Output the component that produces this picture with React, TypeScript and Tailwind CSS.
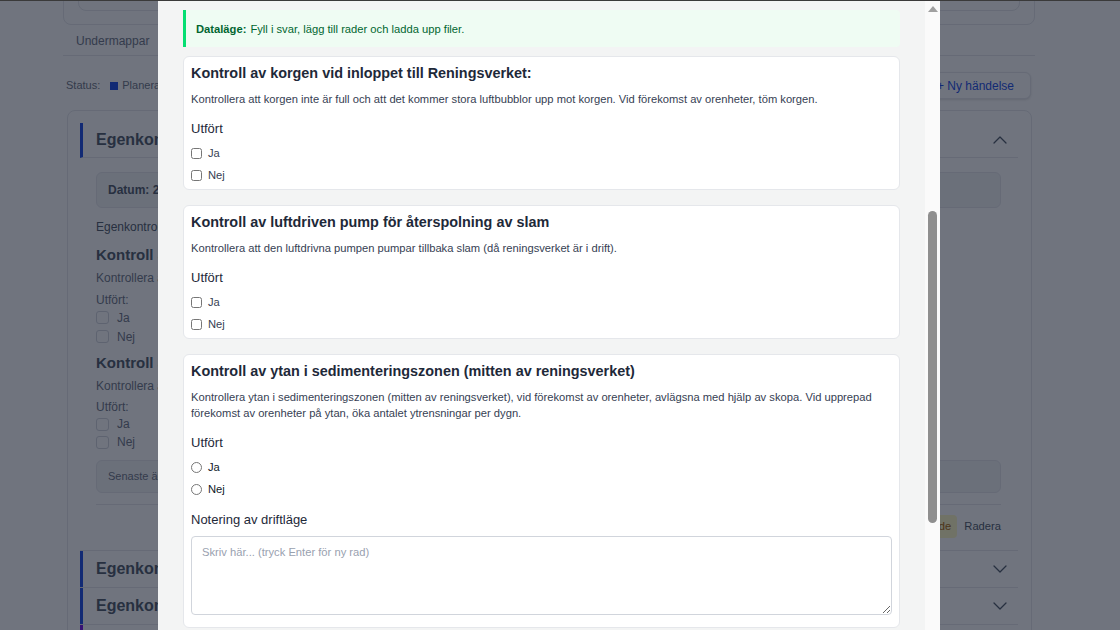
import { ChevronDown, ChevronUp } from "lucide-react";

type Question = {
  title: string;
  desc: React.ReactNode;
  kind: "checkbox" | "radio";
  note?: boolean;
};

const questions: Question[] = [
  {
    title: "Kontroll av korgen vid inloppet till Reningsverket:",
    desc: "Kontrollera att korgen inte är full och att det kommer stora luftbubblor upp mot korgen. Vid förekomst av orenheter, töm korgen.",
    kind: "checkbox",
  },
  {
    title: "Kontroll av luftdriven pump för återspolning av slam",
    desc: "Kontrollera att den luftdrivna pumpen pumpar tillbaka slam (då reningsverket är i drift).",
    kind: "checkbox",
  },
  {
    title: "Kontroll av ytan i sedimenteringszonen (mitten av reningsverket)",
    desc: (
      <>
        Kontrollera ytan i sedimenteringszonen (mitten av reningsverket), vid förekomst av orenheter, avlägsna med hjälp av skopa. Vid upprepad
        <br />
        förekomst av orenheter på ytan, öka antalet ytrensningar per dygn.
      </>
    ),
    kind: "radio",
    note: true,
  },
];

function BgCheck({ label, tight = false }: { label: string; tight?: boolean }) {
  return (
    <div className={tight ? "flex h-[18px] items-center gap-2" : "flex h-[19px] items-center gap-2"}>
      <span className="h-[13px] w-[13px] rounded-[3px] border border-gray-300 bg-white" />
      <span className="text-xs text-gray-500">{label}</span>
    </div>
  );
}

function BgRow({ title, color }: { title: string; color: string }) {
  return (
    <div className="border-b border-gray-200">
      <div className={`flex h-[36px] items-center justify-between border-l-[3px] pl-[13px] pr-[6px] ${color}`}>
        <span className="text-base font-bold text-gray-600">{title}</span>
        <ChevronDown size={24} strokeWidth={1.3} className="text-gray-600" />
      </div>
    </div>
  );
}

function BackgroundPage() {
  return (
    <div className="h-full w-[1035px] bg-white pl-[63px]">
      <div className="-mt-5 h-[45px] rounded-lg border border-gray-200 bg-white px-[14px]">
        <div className="flex h-[30px] items-end rounded-lg border border-gray-200 pb-[5px] pl-[34px]">
          <span className="text-sm font-bold text-gray-700">Skötselinstruktioner</span>
        </div>
      </div>

      <div className="flex h-[31px] items-center border-b border-gray-200 px-[13px] pt-[2px]">
        <span className="text-xs font-medium text-gray-500">Undermappar</span>
      </div>

      <div className="mt-[16px] flex h-[27px] items-center justify-between pl-[3px] pr-[4px]">
        <div className="flex items-center gap-[4px] text-[11px] text-gray-500">
          <span className="mr-[6px]">Status:</span>
          <span className="h-[8px] w-[8px] bg-blue-700" />
          <span>Planerad</span>
          <span className="ml-2 h-[8px] w-[8px] bg-yellow-400" />
          <span>Pågående</span>
        </div>
        <button className="h-[27px] rounded-md border border-gray-200 bg-white px-4 text-xs font-medium text-blue-700 shadow-sm">
          + Ny händelse
        </button>
      </div>

      <div className="ml-[4px] mr-[3px] mt-[11px] h-[600px] rounded-lg border border-gray-200 bg-white py-[12px] pl-[12px] pr-[13px]">
        <div className="border-b border-gray-200">
          <div className="flex h-[35px] items-center justify-between border-b border-l-[3px] border-b-gray-200 border-l-blue-700 pl-[13px] pr-[6px]">
            <span className="text-base font-bold text-gray-600">Egenkontroll – Minireningsverk</span>
            <ChevronUp size={24} strokeWidth={1.3} className="text-gray-600" />
          </div>
          <div className="pb-[12px] pl-[16px] pr-[17px]">
            <div className="mt-[14px] flex h-[36px] items-center rounded-md border border-gray-200 bg-gray-100 px-[11px]">
              <span className="text-xs font-bold text-gray-600">Datum: 2025-03-14</span>
            </div>
            <p className="mt-[11px] text-xs leading-4 text-gray-600">Egenkontroll utförd av: Anders Lindqvist</p>
            <p className="mt-[10px] text-[15px] font-bold leading-5 text-gray-600">Kontroll av korgen vid inloppet</p>
            <p className="mt-[5px] text-xs leading-4 text-gray-500">Kontrollera att korgen inte är full.</p>
            <p className="mt-[6px] text-xs leading-4 text-gray-500">Utfört:</p>
            <BgCheck label="Ja" />
            <BgCheck label="Nej" />
            <p className="mt-[7px] text-[15px] font-bold leading-5 text-gray-600">Kontroll av luftdriven pump</p>
            <p className="mt-[5px] text-xs leading-4 text-gray-500">Kontrollera att pumpen pumpar tillbaka slam.</p>
            <p className="mt-[5px] text-xs leading-4 text-gray-500">Utfört:</p>
            <BgCheck label="Ja" tight />
            <BgCheck label="Nej" tight />
            <div className="mt-[9px] flex h-[33px] items-center rounded-md border border-gray-200 bg-gray-100 px-[11px]">
              <span className="text-[11px] text-gray-500">Senaste ändring: 2025-03-14 09:42</span>
            </div>
            <div className="mt-[11px] border-t border-gray-200" />
            <div className="mt-[10px] flex items-center justify-end gap-[7px]">
              <button className="h-[23px] rounded bg-yellow-100 px-[6px] text-[11.2px] font-medium text-yellow-700">Pågående</button>
              <button className="h-[23px] text-[11.2px] text-gray-600">Radera</button>
            </div>
          </div>
        </div>
        <BgRow title="Egenkontroll – Minireningsverk" color="border-l-blue-700" />
        <BgRow title="Egenkontroll – Minireningsverk" color="border-l-blue-700" />
        <BgRow title="Egenkontroll – Slamtömning" color="border-l-violet-700" />
      </div>
    </div>
  );
}

function QuestionCard({ q, idx }: { q: Question; idx: number }) {
  const radio = q.kind === "radio";
  return (
    <div className={q.note ? "rounded-md border border-gray-200 bg-white px-[7px] pb-[12px] pt-[7px]" : "rounded-md border border-gray-200 bg-white px-[7px] pb-[5px] pt-[7px]"}>
      <h3 className="text-[14.4px] font-bold leading-[18px] text-gray-800">{q.title}</h3>
      <p className="mt-[9px] text-[11.2px] leading-4 text-gray-700">{q.desc}</p>
      <p className="mt-[13px] text-[13px] leading-[18px] text-gray-800">Utfört</p>
      <div className="mt-[6px] flex flex-col gap-[4px]">
        {["Ja", "Nej"].map((opt) => (
          <label key={opt} className="flex h-[18px] items-center gap-[6px]">
            <input
              type={radio ? "radio" : "checkbox"}
              name={`q${idx}`}
              className="m-0 h-[11px] w-[11px]"
            />
            <span className={radio ? "text-[11.2px] text-gray-900" : "text-[11.2px] text-gray-700"}>{opt}</span>
          </label>
        ))}
      </div>
      {q.note && (
        <>
          <p className="mt-[13px] text-[13px] leading-[18px] text-gray-800">Notering av driftläge</p>
          <textarea
            placeholder="Skriv här... (tryck Enter för ny rad)"
            className="mt-[7px] block h-[79px] w-full rounded-sm border border-gray-300 px-[10px] pt-[7px] text-[11.2px] leading-4 text-gray-800 placeholder:text-gray-400"
          />
        </>
      )}
    </div>
  );
}

export default function App() {
  return (
    <div className="relative h-[630px] w-[1120px] overflow-hidden bg-white font-['Liberation_Sans',Arial,sans-serif]">
      <BackgroundPage />
      <div className="absolute inset-0 bg-gray-900/60" />

      <div className="absolute inset-y-0 left-[158px] flex w-[782px] bg-[#f3f4f4]">
        <div className="flex-1 overflow-hidden px-[25px] pt-[10px]">
          <div className="flex h-[37px] items-center rounded-r-sm border-l-[3px] border-green-400 bg-[#effcf3] px-[10px] pt-px text-[11.2px] text-green-800">
            <b className="mr-1">Dataläge:</b>
            <span>Fyll i svar, lägg till rader och ladda upp filer.</span>
          </div>
          <div className="mt-[9px] flex flex-col gap-[15px]">
            {questions.map((q, i) => (
              <QuestionCard key={i} q={q} idx={i} />
            ))}
          </div>
        </div>
        <div className="flex w-[15px] flex-col items-center bg-[#fafafa]">
          <div className="mt-[6px] h-0 w-0 border-x-[5px] border-b-[6px] border-x-transparent border-b-[#a0a0a0]" />
          <div className="mt-[199px] h-[312px] w-[9px] rounded-full bg-[#8f8f8f]" />
        </div>
      </div>

      <div className="absolute inset-x-0 top-0 h-px bg-[#3a3a3a]" />
    </div>
  );
}
